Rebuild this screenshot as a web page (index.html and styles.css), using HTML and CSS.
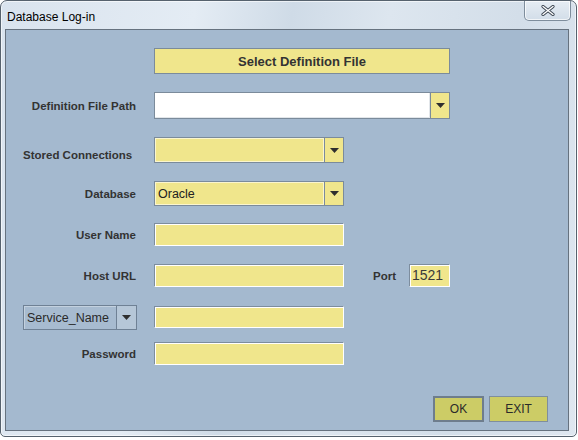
FILE: index.html
```html
<!DOCTYPE html>
<html>
<head>
<meta charset="utf-8">
<link rel="stylesheet" href="styles.css">
</head>
<body>
<div class="window">
  <div class="titlebar">
    <div class="title">Database Log-in</div>
    <div class="close-btn">
      <svg width="14" height="11" viewBox="0 0 14 11">
        <path d="M2 1.5 L12 9.5 M12 1.5 L2 9.5" stroke="#3a4450" stroke-width="3.2" stroke-linecap="round" fill="none"/>
        <path d="M2 1.5 L12 9.5 M12 1.5 L2 9.5" stroke="#ffffff" stroke-width="1.4" stroke-linecap="round" fill="none"/>
      </svg>
    </div>
  </div>
  <div class="client">
    <div class="row r-select">
      <div class="label"></div>
      <div class="select-btn">Select Definition File</div>
    </div>
    <div class="row r-def">
      <div class="label">Definition File Path</div>
      <div class="combo combo-wide">
        <div class="combo-text white"></div>
        <div class="combo-btn"><svg width="9" height="5" viewBox="0 0 9 5"><polygon points="0,0 9,0 4.5,5" fill="#2f2f2f"/></svg></div>
      </div>
    </div>
    <div class="row r-stored">
      <div class="label left low">Stored Connections</div>
      <div class="combo">
        <div class="combo-text"></div>
        <div class="combo-btn"><svg width="9" height="5" viewBox="0 0 9 5"><polygon points="0,0 9,0 4.5,5" fill="#2f2f2f"/></svg></div>
      </div>
    </div>
    <div class="row r-db">
      <div class="label">Database</div>
      <div class="combo">
        <div class="combo-text">Oracle</div>
        <div class="combo-btn"><svg width="9" height="5" viewBox="0 0 9 5"><polygon points="0,0 9,0 4.5,5" fill="#2f2f2f"/></svg></div>
      </div>
    </div>
    <div class="row r-user">
      <div class="label">User Name</div>
      <div class="field"></div>
    </div>
    <div class="row r-host">
      <div class="label">Host URL</div>
      <div class="field"></div>
      <div class="port-label">Port</div>
      <div class="field port-field">1521</div>
    </div>
    <div class="row r-service">
      <div class="service-combo">
        <div class="service-text">Service_Name</div>
        <div class="service-btn"><svg width="9" height="5" viewBox="0 0 9 5"><polygon points="0,0 9,0 4.5,5" fill="#2f2f2f"/></svg></div>
      </div>
      <div class="field field-service"></div>
    </div>
    <div class="row r-pwd">
      <div class="label">Password</div>
      <div class="field"></div>
    </div>
    <div class="buttons">
      <div class="btn btn-ok">OK</div>
      <div class="btn btn-exit">EXIT</div>
    </div>
  </div>
</div>
</body>
</html>
```
FILE: styles.css
```css
html, body {
  margin: 0;
  padding: 0;
  background: #ffffff;
}
body {
  width: 578px;
  height: 440px;
  overflow: hidden;
  font-family: "Liberation Sans", Arial, sans-serif;
}
.window {
  box-sizing: border-box;
  width: 577px;
  height: 437px;
  border: 1px solid #56626e;
  border-radius: 7px 7px 5px 5px;
  background: linear-gradient(100deg, #d9e3ee 0%, #e4ecf4 30%, #cfdbe7 45%, #dde6ef 60%, #d3dee9 80%, #dfe7f0 100%);
  box-shadow: inset 0 0 0 1px rgba(255,255,255,0.6);
}
.titlebar {
  height: 28px;
  display: flex;
  justify-content: space-between;
  align-items: flex-start;
}
.title {
  margin-left: 6px;
  margin-top: 9px;
  font-size: 12px;
  color: #000;
  line-height: 15px;
}
.close-btn {
  box-sizing: border-box;
  width: 47px;
  height: 20px;
  margin-right: 5px;
  border: 1px solid #7e8d9c;
  border-top: none;
  border-radius: 0 0 5px 5px;
  background: linear-gradient(#e6edf4, #d2dde8);
  box-shadow: inset 0 0 0 1px rgba(255,255,255,0.7);
  display: flex;
  align-items: center;
  justify-content: center;
}
.client {
  box-sizing: border-box;
  margin-left: 4px;
  width: 564px;
  height: 402px;
  border: 1px solid #66727f;
  background: #a4b9cf;
  display: flex;
  flex-direction: column;
  padding-left: 17px;
}
.row {
  display: flex;
  align-items: center;
}
.label {
  width: 113px;
  margin-right: 18px;
  text-align: right;
  font-weight: bold;
  font-size: 11.5px;
  color: #333333;
  flex-shrink: 0;
}
.label.left {
  text-align: left;
}
.label.low {
  padding-top: 10px;
}
.r-select { margin-top: 18px; height: 26px; }
.r-def { margin-top: 18px; height: 27px; }
.r-stored { margin-top: 18px; height: 26px; }
.r-db { margin-top: 18px; height: 25px; }
.r-user { margin-top: 17px; height: 23px; }
.r-host { margin-top: 18px; height: 23px; }
.r-service { margin-top: 18px; height: 25px; }
.r-pwd { margin-top: 12px; height: 23px; }

.select-btn {
  box-sizing: border-box;
  width: 296px;
  height: 26px;
  border: 1px solid #7b8b9b;
  background: #f0e68c;
  font-weight: bold;
  font-size: 13px;
  color: #333333;
  display: flex;
  align-items: center;
  justify-content: center;
}
.combo {
  box-sizing: border-box;
  width: 190px;
  height: 100%;
  border: 1px solid #7b8b9b;
  display: flex;
}
.combo-wide {
  width: 296px;
}
.combo-text {
  flex: 1;
  background: #f0e68c;
  box-shadow: inset 1px 1px 0 #fbf6cf, inset -1px -1px 0 #fbf6cf;
  font-size: 12.5px;
  color: #222222;
  display: flex;
  align-items: center;
  padding-left: 3px;
}
.combo-text.white {
  background: #ffffff;
  box-shadow: inset -1px -1px 0 #e2e6ea;
}
.combo-btn {
  width: 18px;
  border-left: 1px solid #7b8b9b;
  background: #f0e68c;
  display: flex;
  align-items: center;
  justify-content: center;
}
.field {
  box-sizing: border-box;
  width: 190px;
  height: 23px;
  border: 1px solid;
  border-color: #7d8d9e #ffffff #ffffff #7d8d9e;
  box-shadow: inset 1px 1px 0 #ffffff;
  background: #f0e68c;
}
.port-label {
  margin-left: 29px;
  width: 24px;
  margin-right: 12px;
  font-weight: bold;
  font-size: 11.5px;
  color: #333333;
}
.port-field {
  width: 41px;
  font-size: 14px;
  color: #3a3a3a;
  padding-left: 2px;
  line-height: 20px;
}
.service-combo {
  box-sizing: border-box;
  width: 114px;
  height: 25px;
  margin-right: 17px;
  border: 1px solid #6f8195;
  background: #a7bbd0;
  box-shadow: inset 1px 1px 0 #c3d1df;
  display: flex;
}
.service-text {
  flex: 1;
  font-size: 12.5px;
  color: #2a2a2a;
  display: flex;
  align-items: center;
  padding-left: 3px;
}
.service-btn {
  width: 19px;
  border-left: 1px solid #6f8195;
  background: #b6c7d8;
  display: flex;
  align-items: center;
  justify-content: center;
}
.field-service {
  height: 22px;
  margin-top: -2px;
}
.buttons {
  margin-top: 31px;
  display: flex;
  justify-content: flex-end;
  gap: 5px;
  padding-right: 20px;
}
.btn {
  box-sizing: border-box;
  height: 26px;
  background: #cccc66;
  border: 1px solid #7f8e9d;
  font-size: 12px;
  color: #2a2a2a;
  display: flex;
  align-items: center;
  justify-content: center;
}
.btn-ok {
  width: 51px;
  border: 2px solid #6e7d8d;
}
.btn-exit {
  width: 59px;
}
```
